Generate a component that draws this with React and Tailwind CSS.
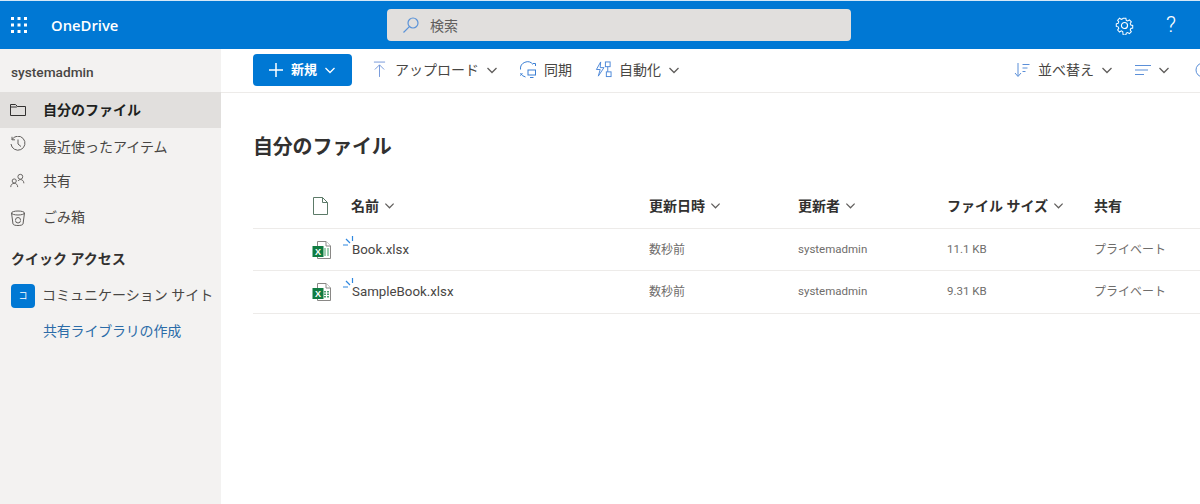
import React from "react";

const FONT = "font-['Roboto','Noto_Sans_CJK_JP',sans-serif]";

function Chevron({ className = "w-3 h-3", color = "#605e5c" }) {
  return (
    <svg viewBox="0 0 12 12" className={className} fill="none" stroke={color} strokeWidth="1.3">
      <path d="M1.5 4l4.5 4.5L10.5 4" />
    </svg>
  );
}

function Waffle() {
  const dots = [];
  for (let y = 0; y < 3; y++) for (let x = 0; x < 3; x++) dots.push(<rect key={`${x}${y}`} x={x * 6.5} y={y * 6.5} width="3" height="3" fill="#fff" />);
  return <svg viewBox="0 0 16 16" className="w-4 h-4">{dots}</svg>;
}

function Gear() {
  return (
    <svg viewBox="0 0 20 20" className="w-[19px] h-[19px]" fill="none" stroke="#fff" strokeWidth="1.2">
      <circle cx="10" cy="10" r="3.2" />
      <path d="M8.4 1.6h3.2l.5 2.4 1.6.7 2.1-1.3 2.2 2.3-1.3 2 .7 1.7 2.2.5v3.1l-2.2.5-.7 1.7 1.3 2-2.2 2.3-2.1-1.3-1.6.7-.5 2.1H8.4L7.9 17l-1.6-.7-2.1 1.3L2 15.3l1.3-2-.7-1.7-2.2-.5V8l2.2-.5.7-1.7-1.3-2 2.2-2.3 2.1 1.3 1.6-.7z" transform="translate(1 1) scale(.9)" />
    </svg>
  );
}

function ExcelIcon({ grid }) {
  return (
    <svg viewBox="0 0 20 20" className="w-5 h-5">
      <path d="M5.5 1.5h8.5l4.5 4.5v12.5h-13z" fill="#fff" stroke="#8a8886" />
      <path d="M14 1.5v4.5h4.5" fill="#fff" stroke="#8a8886" />
      {grid ? (
        <g fill="#4ea072">
          <rect x="12" y="9" width="2" height="1.5" /><rect x="15" y="9" width="2" height="1.5" />
          <rect x="12" y="11.5" width="2" height="1.5" /><rect x="15" y="11.5" width="2" height="1.5" />
          <rect x="12" y="14" width="2" height="1.5" /><rect x="15" y="14" width="2" height="1.5" />
        </g>
      ) : (
        <g fill="#9fd0b2">
          <rect x="12" y="8" width="2" height="8" /><rect x="15" y="8" width="2" height="8" />
        </g>
      )}
      <rect x="0.5" y="6" width="11" height="11" fill="#107c41" />
      <text x="6" y="14.600" textAnchor="middle" fontSize="9" fontWeight="700" fill="#fff" fontFamily="Liberation Sans">X</text>
    </svg>
  );
}

// 新着ファイルの左上に付く青いマーク
function NewMark() {
  return (
    <svg viewBox="0 0 11 11" className="absolute left-[-9px] top-[-6px] w-[11px] h-[11px]" fill="none" stroke="#2f88e0" strokeWidth="1.2">
      <path d="M0 9h5M3 3l4 4M9.500 0v5" />
    </svg>
  );
}

function NavItem({ icon, label, active, labelClass = "" }) {
  return (
    <div className={`flex items-center h-9 pl-[10px] ${active ? "bg-[#e1dfdd] font-semibold text-[#201f1e]" : "text-[#484644]"}`}>
      <span className="w-[33px] flex shrink-0">{icon}</span>
      <span className={`text-sm ${labelClass}`}>{label}</span>
    </div>
  );
}

function ToolButton({ icon, label, chevron = true, className = "" }) {
  return (
    <div className={`flex items-center text-sm text-[#484644] ${className}`}>
      {icon}
      {label && <span>{label}</span>}
      {chevron && <Chevron className="w-3 h-3 ml-[7px]" />}
    </div>
  );
}

function Row({ name, grid, size, height }) {
  return (
    <div className={`grid grid-cols-[98px_298px_149px_149px_147px_1fr] items-center ${height} border-b border-[#edebe9] text-xs text-[#6f6d6b]`}>
      <div className="pl-[59px] flex"><ExcelIcon grid={grid} /></div>
      <div className="relative text-[13.3px] text-[#484644] pl-px"><span className="relative"><NewMark />{name}</span></div>
      <div>数秒前</div>
      <div className="text-[11.5px]">systemadmin</div>
      <div className="text-[11.5px]">{size}</div>
      <div>プライベート</div>
    </div>
  );
}

function HeaderCell({ label }) {
  return (
    <div className="flex items-center text-sm font-semibold text-[#323130]">
      {label}
      <Chevron className="w-[11px] h-[11px] ml-[5px]" />
    </div>
  );
}

export default function App() {
  return (
    <div className={`${FONT} w-[1200px] h-[504px] overflow-hidden bg-white flex flex-col`}>
      <header className="h-[49px] shrink-0 bg-[#0078d4] border-t border-[#d5e8f7] grid grid-cols-[387px_464px_1fr] items-center text-white">
        <div className="flex items-center pl-[11px]">
          <Waffle />
          <span className="ml-[24px] text-[14.8px] font-semibold font-['Open_Sans',sans-serif]">OneDrive</span>
        </div>
        <div className="h-8 rounded bg-[#e1dfdd] flex items-center pl-[15px] text-sm text-[#605e5c]">
          <svg viewBox="0 0 18 18" className="w-[18px] h-[18px] mr-[10px]" fill="none" stroke="#5b93d8" strokeWidth="1.2">
            <circle cx="11" cy="7" r="5" />
            <path d="M7.4 10.6L1.5 16.5" />
          </svg>
          <span className="pt-px">検索</span>
        </div>
        <div className="flex items-center justify-end pr-[24px] gap-[32px]">
          <Gear />
          <span className="text-[22px] font-light leading-none">?</span>
        </div>
      </header>
      <div className="flex flex-1 min-h-0">
        <aside className="w-[221px] shrink-0 bg-[#f3f2f1] flex flex-col">
          <div className="h-[43px] pl-[11px] pt-[3px] flex items-center text-[13.7px] text-[#484644] font-medium">systemadmin</div>
          <NavItem
            active
            label="自分のファイル"
            icon={
              <svg viewBox="0 0 16 14" className="w-4 h-[14px]" fill="none" stroke="#323130">
                <path d="M.5 12.5v-11h5l2 2h8v9z" />
                <path d="M.5 4h6l1-.5" />
              </svg>
            }
          />
          <NavItem
            label="最近使ったアイテム"
            labelClass="pt-[2px]"
            icon={
              <svg viewBox="0 0 16 16" className="w-4 h-4 -mt-1" fill="none" stroke="#605e5c">
                <path d="M2 3.5A7 7 0 1 1 1 8M2 .8v3h3M8 3.5v4.5l3 2.5" />
              </svg>
            }
          />
          <NavItem
            label="共有"
            labelClass="pb-[2px]"
            icon={
              <svg viewBox="0 0 16 16" className="w-[15px] h-[15px] -mt-1" fill="none" stroke="#605e5c">
                <circle cx="11" cy="4" r="2.6" />
                <circle cx="4.5" cy="8.5" r="2.2" />
                <path d="M.8 15c0-2.5 1.6-4 3.7-4s3.7 1.5 3.7 4M8.5 8.5C9.2 7.5 10 7 11 7c2 0 3.8 1.4 3.8 4" />
              </svg>
            }
          />
          <NavItem
            label="ごみ箱"
            labelClass="pb-[2px]"
            icon={
              <svg viewBox="0 0 16 16" className="w-4 h-4" fill="none" stroke="#605e5c">
                <ellipse cx="8" cy="3" rx="6.5" ry="2" />
                <path d="M1.5 3l1.5 11c.3 1 2.5 1.5 5 1.5s4.700-.5 5-1.500L14.500 3M5.500 10a2.500 2.500 0 0 1 5 0M5.500 10.500a2.500 2.500 0 0 0 5 0" />
              </svg>
            }
          />
          <div className="h-[45px] pl-[11px] flex items-center text-sm font-semibold text-[#323130]">クイック アクセス</div>
          <div className="flex items-center h-[30px] pl-[11px] text-sm text-[#484644] whitespace-nowrap">
            <span className="w-6 h-6 rounded-sm bg-[#0078d4] text-white text-[9px] flex items-center justify-center mr-[7px]">コ</span>
            <span className="pb-[2px]">コミュニケーション サイト</span>
          </div>
          <div className="pl-[43px] mt-[10px] text-sm tracking-[-0.2px] text-[#2b6ca8]">共有ライブラリの作成</div>
        </aside>
        <main className="flex-1 min-w-0 flex flex-col">
          <div className="h-11 shrink-0 border-b border-[#edebe9] flex items-center pl-[32px] pb-[2px] whitespace-nowrap">
            <div className="w-[99px] h-8 rounded-sm bg-[#0078d4] text-white text-[13px] font-semibold flex items-center justify-center">
              <svg viewBox="0 0 14 14" className="w-[14px] h-[14px] mr-[8px]" stroke="#fff" strokeWidth="1.5">
                <path d="M7 0v14M0 7h14" />
              </svg>
              新規
              <Chevron className="w-3 h-3 ml-[7px]" color="#fff" />
            </div>
            <ToolButton
              className="ml-[21px]"
              label="アップロード"
              icon={
                <svg viewBox="0 0 14 18" className="w-[13px] h-[17px] mr-[9px]" fill="none" stroke="#6f94d8">
                  <path d="M1 1h12M7 17V4M2 9l5-5 5 5" />
                </svg>
              }
            />
            <ToolButton
              className="ml-[21px]"
              label="同期"
              chevron={false}
              icon={
                <svg viewBox="0 0 18 18" className="w-[18px] h-[18px] mr-[7px]" fill="none" stroke="#3b7fd4">
                  <path d="M1.500 8.500A7 7 0 0 1 14 3.500M16.500 5v-2.500h-2.500M1.500 12a7 7 0 0 0 5 4M1 14.500l2.500-2" />
                  <rect x="9" y="9" width="7.500" height="5" />
                  <path d="M11 16.500h3.500" />
                </svg>
              }
            />
            <ToolButton
              className="ml-[23px]"
              label="自動化"
              icon={
                <svg viewBox="0 0 18 18" className="w-[17px] h-[17px] mr-[7px]" fill="none" stroke="#4a86d8">
                  <path d="M6 1L1.500 9h4l-2 7 6-9H5.500z" />
                  <rect x="11" y="1" width="5" height="5" />
                  <rect x="12" y="11.500" width="5" height="5" />
                  <path d="M13.500 6v5.500" />
                </svg>
              }
            />
            <ToolButton
              className="ml-auto"
              label="並べ替え"
              icon={
                <svg viewBox="0 0 16 16" className="w-4 h-4 mr-[8px]" fill="none" stroke="#5b8fd8">
                  <path d="M4 1v13M1 11l3 3.500 3-3.500M8.500 2.500h7M8.500 6h5M8.500 9.500h3" />
                </svg>
              }
            />
            <ToolButton
              className="ml-[22px]"
              icon={
                <svg viewBox="0 0 16 12" className="w-4 h-3" fill="none" stroke="#5b8fd8">
                  <path d="M0 1.500h16M0 6h13M0 10.500h9" />
                </svg>
              }
            />
            <svg viewBox="0 0 16 16" className="w-4 h-4 ml-[25px] mr-[-11px] shrink-0" fill="none" stroke="#5b8fd8">
              <circle cx="8" cy="8" r="7" />
            </svg>
          </div>
          <div className="pl-[32px]">
            <h1 className="h-[100px] pt-[40px] text-xl font-semibold tracking-[-0.2px] text-[#323130]">自分のファイル</h1>
            <div className="grid grid-cols-[98px_298px_149px_149px_147px_1fr] items-center h-[29px] mt-[-2px] mb-[8px]">
              <div className="pl-[60px] flex">
                <svg viewBox="0 0 15 18" className="w-[15px] h-[18px]" fill="none" stroke="#5c7a68">
                  <path d="M.5.500h9l5 5v12h-14zM9.500.500v5h5" />
                </svg>
              </div>
              <HeaderCell label="名前" />
              <HeaderCell label="更新日時" />
              <HeaderCell label="更新者" />
              <HeaderCell label="ファイル サイズ" />
              <div className="text-sm font-semibold text-[#323130]">共有</div>
            </div>
            <div className="border-t border-[#edebe9]">
              <Row name="Book.xlsx" size="11.1 KB" height="h-[42px]" />
              <Row name="SampleBook.xlsx" grid size="9.31 KB" height="h-[43px]" />
            </div>
          </div>
        </main>
      </div>
    </div>
  );
}
